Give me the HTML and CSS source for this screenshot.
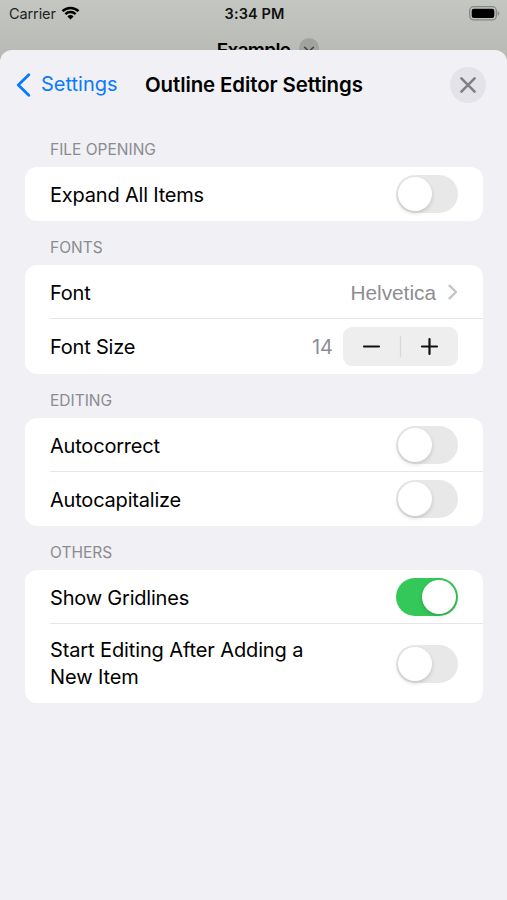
FILE: index.html
```html
<!DOCTYPE html>
<html lang="en">
<head>
  <meta charset="UTF-8">
  <meta name="viewport" content="width=device-width, initial-scale=1.0">
  <title>Outline Editor Settings</title>
  <link rel="stylesheet" href="styles.css">
</head>
<body>
  <div class="status-bar">
    <div class="carrier">
      <span>Carrier</span>
      <svg class="wifi" width="19" height="14" viewBox="0 0 18 14">
        <path d="M1 5.2a11.3 11.3 0 0 1 16 0M3.9 8.2a7.2 7.2 0 0 1 10.2 0" fill="none" stroke="#000" stroke-width="2.5"/>
        <path d="M9 13.6L5.9 10.4a4.4 4.4 0 0 1 6.2 0z"/>
      </svg>
    </div>
    <div class="time">3:34 PM</div>
    <svg class="battery" width="31" height="15" viewBox="0 0 31 15">
      <rect x=".7" y=".7" width="26.6" height="13.2" rx="4" fill="none" stroke="#858783" stroke-width="1.3"/>
      <rect x="2.7" y="2.7" width="22.6" height="9.2" rx="2.2"/>
      <path d="M28.7 5v4.8q1.6-.7 1.6-2.4t-1.6-2.4z" fill="#858783"/>
    </svg>
  </div>
  <div class="document-bar">
    <span class="document-name">Example</span>
    <svg class="document-menu" width="20" height="20" viewBox="0 0 20 20">
      <circle cx="10" cy="10" r="10" fill="#a1a39f"/>
      <path d="M5.7 9.3l4.3 4.2 4.3-4.2" fill="none" stroke="#4c4d4b" stroke-width="1.7" stroke-linecap="round"/>
    </svg>
  </div>

  <main class="sheet">
    <header class="nav">
      <a class="back" href="#">
        <svg width="15" height="24" viewBox="0 0 15 24">
          <path d="M12.8 1.8L2.3 12l10.5 10.2" fill="none" stroke="#087aff" stroke-width="2.8" stroke-linecap="round" stroke-linejoin="round"/>
        </svg>
        <span>Settings</span>
      </a>
      <h1>Outline Editor Settings</h1>
      <button class="close" aria-label="Close">
        <svg width="36" height="36" viewBox="0 0 36 36">
          <path d="M11.4 11.4l13.2 13.2M24.6 11.4L11.4 24.6" stroke="#7f7f84" stroke-width="2.6" stroke-linecap="round"/>
        </svg>
      </button>
    </header>

    <section>
      <h2>File Opening</h2>
      <div class="card">
        <div class="row"><span class="label">Expand All Items</span><span class="toggle"></span></div>
      </div>
    </section>

    <section>
      <h2>Fonts</h2>
      <div class="card">
        <div class="row">
          <span class="label">Font</span>
          <span class="value helvetica">Helvetica</span>
          <svg class="chevron" width="10" height="16" viewBox="0 0 10 16">
            <path d="M1.5 1.7L8 8l-6.5 6.3" fill="none" stroke="#c4c4c6" stroke-width="2.3" stroke-linecap="round" stroke-linejoin="round"/>
          </svg>
        </div>
        <div class="row">
          <span class="label">Font Size</span>
          <span class="value size">14</span>
          <div class="stepper">
            <svg width="115" height="39" viewBox="0 0 115 39">
              <path d="M21 19.5h15M79 19.5h15M86.5 12v15" stroke="#111" stroke-width="2.2" stroke-linecap="round"/>
              <path d="M57.5 9v21" stroke="#d8d8da" stroke-width="1.2"/>
            </svg>
          </div>
        </div>
      </div>
    </section>

    <section>
      <h2>Editing</h2>
      <div class="card">
        <div class="row"><span class="label">Autocorrect</span><span class="toggle"></span></div>
        <div class="row"><span class="label">Autocapitalize</span><span class="toggle"></span></div>
      </div>
    </section>

    <section>
      <h2>Others</h2>
      <div class="card">
        <div class="row"><span class="label">Show Gridlines</span><span class="toggle on"></span></div>
        <div class="row tall"><span class="label">Start Editing After Adding a<br>New Item</span><span class="toggle"></span></div>
      </div>
    </section>
  </main>
</body>
</html>
```

FILE: styles.css
```css
* {
  box-sizing: border-box;
}
body {
  margin: 0;
  height: 900px;
  display: flex;
  flex-direction: column;
  overflow: hidden;
  font-family: Inter, "Liberation Sans", sans-serif;
  color: #000;
  background: linear-gradient(#c4c6c2, #b6b8b4 64px);
}
.status-bar {
  flex: none;
  height: 27px;
  padding: 0 7px 0 9px;
  display: grid;
  grid-template-columns: 1fr auto 1fr;
  align-items: center;
  font-size: 14.5px;
}
.carrier {
  display: flex;
  align-items: center;
  gap: 5px;
  color: #222;
  letter-spacing: -0.1px;
}
.wifi {
  margin-top: -2px;
}
.time {
  font-weight: 600;
  letter-spacing: 0.1px;
  color: #111;
}
.battery {
  justify-self: end;
}
.document-bar {
  flex: none;
  height: 23px;
  padding: 11px 0 0 29px;
  display: flex;
  justify-content: center;
  gap: 9px;
  overflow: hidden;
  font-size: 19px;
  line-height: 25px;
  font-weight: 600;
}
.document-name {
  letter-spacing: -0.7px;
}
.document-menu {
  flex: none;
}
.sheet {
  flex: 1;
  padding: 0 25px;
  background: #f0f0f5;
  border-radius: 12px 12px 0 0;
}
.nav {
  height: 69px;
  margin: 0 -4px 0 -9px;
  display: flex;
  align-items: center;
  font-size: 20px;
}
.back {
  display: flex;
  align-items: center;
  gap: 10px;
  width: 129px;
  color: #087aff;
  text-decoration: none;
}
.back span,
h1 {
  margin-top: -1px;
}
h1 {
  flex: 1;
  margin-bottom: 0;
  font-size: 20.4px;
  font-weight: 600;
  letter-spacing: -0.08px;
  white-space: nowrap;
}
.close {
  width: 36px;
  height: 36px;
  padding: 0;
  border: none;
  border-radius: 50%;
  background: #e4e3e9;
}
.close svg {
  display: block;
}
h2 {
  margin: 0;
  padding: 0 25px;
  height: 44px;
  line-height: 53px;
  font-size: 15.5px;
  font-weight: 400;
  text-transform: uppercase;
  color: #8b8b90;
}
section:first-of-type h2 {
  height: 48px;
  line-height: 62px;
}
.card {
  width: 458px;
  border-radius: 12px;
  background: #fff;
}
.row {
  position: relative;
  display: flex;
  align-items: center;
  height: 54.2px;
  padding: 0 25px;
  font-size: 20px;
}
.row + .row::before {
  content: "";
  position: absolute;
  top: -1px;
  left: 25px;
  right: 0;
  height: 1px;
  background: #e6e6e8;
}
.tall {
  height: 79px;
  line-height: 27px;
}
.label {
  flex: 1;
  padding-top: 2px;
  letter-spacing: -0.2px;
  white-space: nowrap;
}
.tall .label {
  padding-top: 1px;
  letter-spacing: -0.12px;
}
.value {
  padding-top: 2px;
  color: #8d8d91;
}
.helvetica {
  font-family: "Liberation Sans", sans-serif;
  font-size: 20.8px;
}
.chevron {
  margin: 0 0 0 12px;
}
.size {
  margin-right: 10px;
}
.stepper {
  width: 115px;
  height: 39px;
  border-radius: 9px;
  background: #eeeeef;
}
.stepper svg {
  display: block;
}
.toggle {
  width: 62px;
  height: 38px;
  padding: 2px;
  border-radius: 19px;
  background: #e8e8e9;
}
.toggle::before {
  content: "";
  display: block;
  width: 34px;
  height: 34px;
  border-radius: 50%;
  background: #fff;
  box-shadow: 0 2px 4px rgba(0, 0, 0, 0.16);
}
.on {
  background: #34c759;
}
.on::before {
  margin-left: auto;
}
```
